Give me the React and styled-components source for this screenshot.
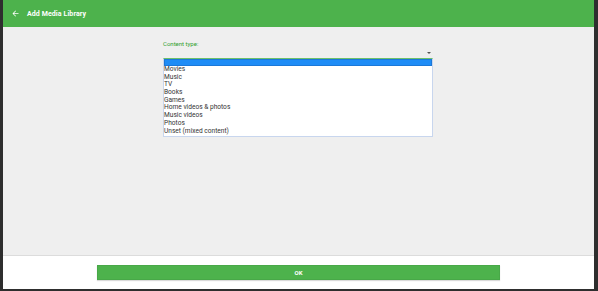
import React from 'react'
import styled, { createGlobalStyle } from 'styled-components'

const Global = createGlobalStyle`
  html, body {
    margin: 0;
    padding: 0;
    background: #2e2e2e;
  }
  body {
    font-family: Roboto, 'Liberation Sans', sans-serif;
  }
`

const Frame = styled.div`
  width: 598px;
  height: 291px;
  box-sizing: border-box;
  border-left: 3px solid #2e2e2e;
  border-right: 4px solid #2e2e2e;
  border-bottom: 2px solid #2e2e2e;
  display: flex;
  flex-direction: column;
  background: #efefef;
`

const Header = styled.header`
  height: 27px;
  background: #4db24c;
  display: flex;
  align-items: center;
  padding-left: 8px;
  gap: 7px;
  color: #fff;
  flex-shrink: 0;
`

const Title = styled.h1`
  margin: 0;
  font-size: 7px;
  font-weight: 700;
  letter-spacing: 0.1px;
`

const Main = styled.main`
  flex: 1;
  padding: 13px 0 0 160px;
  border-bottom: 1px solid #dcdcdc;
`

const Field = styled.div`
  width: 270px;
`

const Label = styled.label`
  display: block;
  font-size: 6px;
  color: #2f9f2f;
  line-height: 8px;
`

const SelectLine = styled.div`
  height: 10px;
  display: flex;
  justify-content: flex-end;
  align-items: center;
  padding-right: 2px;
`

const Caret = styled.span`
  width: 0;
  height: 0;
  border-left: 2px solid transparent;
  border-right: 2px solid transparent;
  border-top: 2px solid #555;
`

const List = styled.div`
  border: 1px solid #c8d6ee;
  border-top: 1px solid #6cc06a;
  background: #fff;
  padding-bottom: 1px;
`

const Option = styled.div`
  box-sizing: border-box;
  height: ${p => (p.$selected ? '7px' : '7.7px')};
  line-height: 7.7px;
  font-size: 6.6px;
  color: #333;
  white-space: nowrap;
  background: ${p => (p.$selected ? '#1e8cf6' : 'transparent')};
  border: ${p => (p.$selected ? '1px solid #1b78d8' : 'none')};
`

const Footer = styled.footer`
  height: 33px;
  background: #fff;
  display: flex;
  align-items: center;
  justify-content: center;
  flex-shrink: 0;
`

const OkButton = styled.button`
  width: 403px;
  height: 15px;
  border: 1px solid #48a848;
  background: #4db24c;
  color: #fff;
  font-family: inherit;
  font-size: 6px;
  font-weight: 700;
  box-shadow: 0 1px 1px rgba(0, 0, 0, 0.15);
  padding: 0;
`

const options = [
  'Movies',
  'Music',
  'TV',
  'Books',
  'Games',
  'Home videos & photos',
  'Music videos',
  'Photos',
  'Unset (mixed content)',
]

const BackArrow = () => (
  <svg width='9' height='9' viewBox='0 0 24 24' fill='#fff'>
    <path d='M20 11H7.83l5.59-5.59L12 4l-8 8 8 8 1.41-1.41L7.83 13H20v-2z' />
  </svg>
)

export default function App() {
  return (
    <>
      <Global />
      <Frame>
        <Header>
          <BackArrow />
          <Title>Add Media Library</Title>
        </Header>
        <Main>
          <Field>
            <Label>Content type:</Label>
            <SelectLine>
              <Caret />
            </SelectLine>
            <List>
              <Option $selected>&nbsp;</Option>
              {options.map(o => (
                <Option key={o}>{o}</Option>
              ))}
            </List>
          </Field>
        </Main>
        <Footer>
          <OkButton>OK</OkButton>
        </Footer>
      </Frame>
    </>
  )
}
